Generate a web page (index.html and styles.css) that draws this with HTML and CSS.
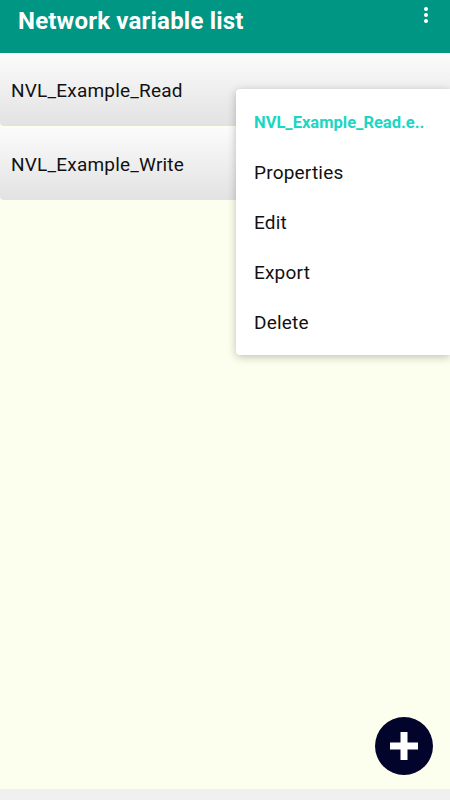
FILE: index.html
```html
<!DOCTYPE html>
<html lang="en">
<head>
    <meta charset="UTF-8">
    <meta name="viewport" content="width=device-width, initial-scale=1.0">
    <title>Network variable list</title>
    <link rel="stylesheet" href="styles.css">
</head>
<body>
    <div class="app">
        <header class="toolbar">
            <h1>Network variable list</h1>
            <div class="overflow">
                <span></span><span></span><span></span>
            </div>
        </header>

        <main class="content">
            <div class="nvl-item">NVL_Example_Read</div>
            <div class="nvl-item">NVL_Example_Write</div>

            <div class="popup-menu">
                <div class="menu-title">NVL_Example_Read.e..</div>
                <div class="menu-item">Properties</div>
                <div class="menu-item">Edit</div>
                <div class="menu-item">Export</div>
                <div class="menu-item">Delete</div>
            </div>

            <button class="fab">
                <svg width="32" height="32" viewBox="0 0 32 32">
                    <rect x="12.5" y="2" width="7" height="28" fill="#fff"/>
                    <rect x="2" y="12.5" width="28" height="7" fill="#fff"/>
                </svg>
            </button>
        </main>

        <div class="nav-bar"></div>
    </div>
</body>
</html>
```

FILE: styles.css
```css
body {
    margin: 0;
    font-family: Roboto, "Noto Sans", sans-serif;
}

.app {
    width: 450px;
    height: 800px;
    display: flex;
    flex-direction: column;
    background: #fdffee;
}

.toolbar {
    height: 53px;
    flex: none;
    background: #009684;
    display: flex;
    justify-content: space-between;
    padding: 0 18px;
    box-sizing: border-box;
}

.toolbar h1 {
    margin: 0;
    padding-top: 6px;
    color: #fff;
    font-size: 24px;
    font-weight: bold;
    line-height: 30px;
    letter-spacing: 0.2px;
}

.overflow {
    display: flex;
    flex-direction: column;
    gap: 2px;
    padding-top: 7px;
    margin-right: 4px;
}

.overflow span {
    width: 4px;
    height: 4px;
    border-radius: 50%;
    background: #fff;
}

.content {
    flex: 1;
    position: relative;
    padding-top: 1px;
}

.nvl-item {
    height: 72px;
    margin-bottom: 2px;
    padding-left: 11px;
    display: flex;
    align-items: center;
    font-size: 19px;
    letter-spacing: 0.2px;
    color: #111;
    background: linear-gradient(#fbfbfb, #e2e2e2);
    border-radius: 0 0 4px 4px;
}

.popup-menu {
    position: absolute;
    left: 236px;
    top: 36px;
    width: 214px;
    height: 266px;
    box-sizing: border-box;
    padding-top: 22px;
    background: #fff;
    border-radius: 4px 0 0 4px;
    box-shadow: 0 2px 8px rgba(0, 0, 0, 0.25);
}

.menu-title,
.menu-item {
    height: 50px;
    padding-left: 18px;
    line-height: 24px;
}

.menu-title {
    color: #1bd6c2;
    font-size: 16.5px;
    font-weight: bold;
}

.menu-item {
    color: #111;
    font-size: 19px;
    letter-spacing: 0.2px;
}

.fab {
    position: absolute;
    left: 375px;
    top: 664px;
    width: 58px;
    height: 58px;
    border: none;
    border-radius: 50%;
    background: #02042b;
    padding: 0;
    display: flex;
    align-items: center;
    justify-content: center;
}

.nav-bar {
    height: 11px;
    flex: none;
    background: #f0f0f0;
}
```
